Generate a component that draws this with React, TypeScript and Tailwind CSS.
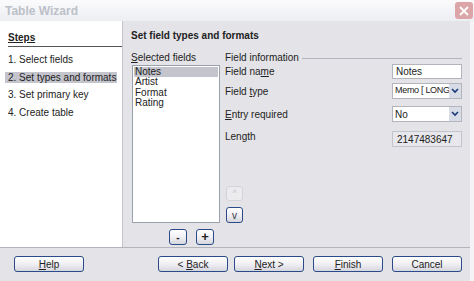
import React from "react";

const font = { fontFamily: "'Liberation Sans', Arial, sans-serif" };

function Btn({ children, className = "" }: { children: React.ReactNode; className?: string }) {
  return (
    <div
      className={
        "flex h-[16px] items-center justify-center rounded-[3px] border border-[#2a4a8a] bg-gradient-to-b from-white via-[#f0f0f4] to-[#d6d6de] text-[10px] text-[#222] " +
        className
      }
    >
      {children}
    </div>
  );
}

function Chevron() {
  return (
    <svg width="8" height="6" viewBox="0 0 8 6">
      <path d="M1 1 L4 4 L7 1" stroke="#1a3a7a" strokeWidth="1.6" fill="none" />
    </svg>
  );
}

export default function App() {
  return (
    <div className="relative h-[281px] w-[474px] overflow-hidden bg-[#f4f4f6] text-[10px] text-[#222]" style={font}>
      {/* title bar */}
      <div className="flex h-[21px] items-center justify-between bg-gradient-to-b from-[#fbfbfd] to-[#eceef2] pl-[5px]">
        <span className="text-[12px] font-bold text-[#bcc0c8]">Table Wizard</span>
        <div className="mr-[1px] flex h-[17px] w-[18px] items-center justify-center rounded-[3px] bg-[#dca6a8]">
          <svg width="10" height="10" viewBox="0 0 10 10">
            <path d="M1 1 L9 9 M9 1 L1 9" stroke="#fff" strokeWidth="1.8" />
          </svg>
        </div>
      </div>
      <div className="flex h-[260px] w-[470px] flex-col bg-[#e4e4e8]">
        <div className="flex h-[227px] border-b border-[#b4b4bc]">
          {/* steps */}
          <div className="w-[123px] border-r border-[#c4c4cc] bg-white pt-[9px]">
            <div className="ml-[8px] border-b border-[#555] pb-[1px] text-[10px] font-bold underline">Steps</div>
            <div className="mt-[7px] flex flex-col gap-[6.7px]">
              <div className="px-[8px] leading-[11px]">1. Select fields</div>
              <div className="mx-[5px] w-[112px] whitespace-nowrap bg-[#c4c4cc] px-[3px] leading-[11px]">2. Set types and formats</div>
              <div className="px-[8px] leading-[11px]">3. Set primary key</div>
              <div className="px-[8px] leading-[11px]">4. Create table</div>
            </div>
          </div>
          {/* right */}
          <div className="flex-1 pl-[8px] pt-[9px]">
            <div className="font-bold leading-[12px]">Set field types and formats</div>
            <div className="mt-[10px] flex">
              <div className="flex w-[90px] flex-col">
                <div className="leading-[12px]">
                  <span className="underline">S</span>elected fields
                </div>
                <div className="ml-[1px] mt-[1px] h-[158px] w-[88px] border border-[#9aa0ac] bg-white p-[1px] leading-[10.4px]">
                  <div className="bg-[#c4c4cc] px-[1px]">Notes</div>
                  <div className="px-[1px]">Artist</div>
                  <div className="px-[1px]">Format</div>
                  <div className="px-[1px]">Rating</div>
                </div>
                <div className="mt-[6px] flex gap-[9px] pl-[38px]">
                  <Btn className="w-[18px] font-bold">-</Btn>
                  <Btn className="w-[18px] text-[13px] font-bold">+</Btn>
                </div>
              </div>
              <div className="ml-[4px] flex flex-1 flex-col pr-[8px]">
                <div className="flex items-center gap-[3px] leading-[12px]">
                  <span>Field information</span>
                  <div className="h-px flex-1 bg-[#b4b4bc]" />
                </div>
                <div className="flex items-center justify-between">
                  <span>
                    Field na<span className="underline">m</span>e
                  </span>
                  <div className="flex h-[15px] w-[70px] items-center border border-[#b4b4bc] bg-white px-[3px]">Notes</div>
                </div>
                <div className="mt-[4px] flex items-center justify-between">
                  <span>
                    Field <span className="underline">t</span>ype
                  </span>
                  <div className="flex h-[16px] w-[70px] items-center border border-[#b4b4bc] bg-white pl-[2px]">
                    <span className="min-w-0 flex-1 whitespace-nowrap text-[9px] tracking-[-0.3px]">Memo [ LONGVA</span>
                    <div className="relative z-10 flex h-full w-[12px] shrink-0 items-center justify-center bg-[#d8dce6]">
                      <Chevron />
                    </div>
                  </div>
                </div>
                <div className="mt-[7px] flex items-center justify-between">
                  <span>
                    <span className="underline">E</span>ntry required
                  </span>
                  <div className="flex h-[16px] w-[70px] items-center border border-[#b4b4bc] bg-white pl-[2px]">
                    <span className="flex-1">No</span>
                    <div className="flex h-full w-[12px] shrink-0 items-center justify-center bg-[#d8dce6]">
                      <Chevron />
                    </div>
                  </div>
                </div>
                <div className="mt-[9px] flex items-start justify-between">
                  <span className="-mt-[2px]">Length</span>
                  <div className="flex h-[16px] w-[70px] items-center border border-[#c4c4cc] bg-[#e8e8ec] px-[4px]">2147483647</div>
                </div>
                <div className="mt-[39px] flex flex-col gap-[6px] pl-[1px]">
                  <div className="flex h-[15px] w-[17px] items-center justify-center rounded-[3px] border border-[#d4d4d8] bg-[#ececee] text-[9px] text-[#c4c4c8]">
                    ^
                  </div>
                  <Btn className="w-[17px] text-[9px] text-[#334]">v</Btn>
                </div>
              </div>
            </div>
          </div>
        </div>
        {/* bottom buttons */}
        <div className="flex items-center pl-[14px] pt-[8px]">
          <Btn className="w-[70px]">
            <span>
              <span className="underline">H</span>elp
            </span>
          </Btn>
          <Btn className="ml-[74px] w-[70px]">
            <span>
              &lt; <span className="underline">B</span>ack
            </span>
          </Btn>
          <Btn className="ml-[6px] w-[70px]">
            <span>
              <span className="underline">N</span>ext &gt;
            </span>
          </Btn>
          <Btn className="ml-[9px] w-[70px]">
            <span>
              <span className="underline">F</span>inish
            </span>
          </Btn>
          <Btn className="ml-[9px] w-[70px]">Cancel</Btn>
        </div>
      </div>
    </div>
  );
}
